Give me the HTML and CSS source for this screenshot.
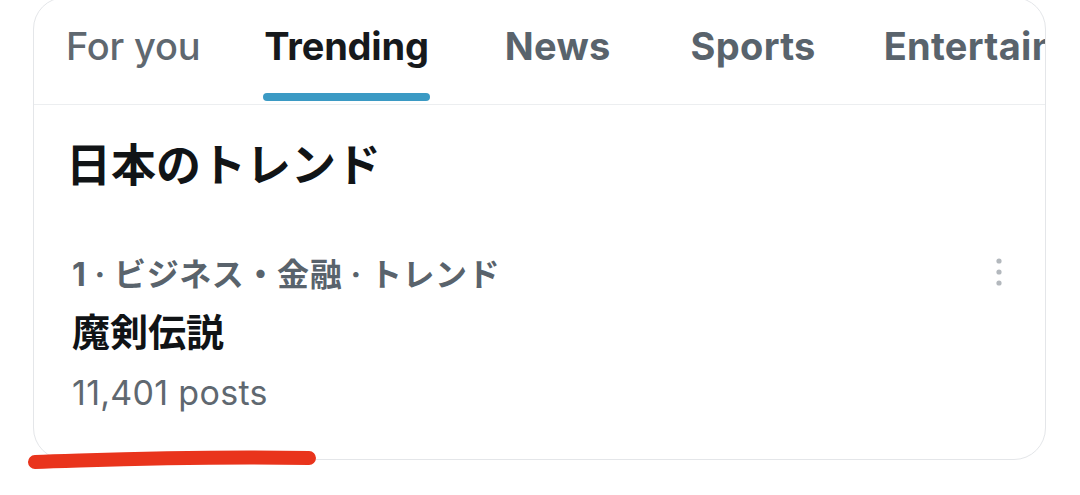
FILE: index.html
```html
<!DOCTYPE html>
<html>
<head>
<meta charset="UTF-8">
<title>Trending</title>
<link rel="stylesheet" href="styles.css">
</head>
<body>
<div class="card">
	<div class="tabs">
		<div class="tab light">For you</div>
		<div class="tab active">Trending</div>
		<div class="tab">News</div>
		<div class="tab narrow">Sports</div>
		<div class="tab">Entertainment</div>
	</div>
	<h2 class="title">日本のトレンド</h2>
	<div class="trend">
		<div class="trend-head">
			<span class="meta">1 · ビジネス・金融 · トレンド</span>
			<svg class="more" width="10" height="30" viewBox="0 0 10 30">
				<circle cx="5" cy="4" r="2.6" fill="#b3b8bd"/>
				<circle cx="5" cy="15" r="2.6" fill="#b3b8bd"/>
				<circle cx="5" cy="26" r="2.6" fill="#b3b8bd"/>
			</svg>
		</div>
		<div class="trend-name">魔剣伝説</div>
		<div class="posts">11,401 posts</div>
	</div>
</div>
<svg class="scribble" width="300" height="26" viewBox="0 0 300 26">
	<path d="M8 17 C 80 15, 150 11, 282 13" stroke="#e9341c" stroke-width="14" stroke-linecap="round" fill="none"/>
</svg>
</body>
</html>
```

FILE: styles.css
```css
body{
	margin : 0;
	background : #ffffff;
	font-family : Inter, "Noto Sans CJK JP", sans-serif;
	overflow : hidden;
}

.card{
	margin : -3px 0 0 33px;
	width : 1013px;
	height : 463px;
	border : 1.5px solid #e4e6e9;
	border-radius : 32px;
	overflow : hidden;
	box-sizing : border-box;
	background : #ffffff;
}

.tabs{
	display : flex;
	height : 107px;
	border-bottom : 1.5px solid #eceef0;
	box-sizing : border-box;
	padding-left : 32px;
	white-space : nowrap;
}

.tab{
	position : relative;
	flex-shrink : 0;
	font-size : 38px;
	font-weight : 700;
	color : #59636c;
	padding : 26px 0 0 0;
	margin-right : 80px;
	line-height : 44px;
	letter-spacing : 0.3px;
}

.tab.narrow{
	margin-right : 68px;
}

.tab.light{
	font-weight : 500;
	color : #5f6870;
	margin-right : 64px;
	letter-spacing : -0.2px;
}

.tab.active{
	color : #16191c;
	letter-spacing : -0.2px;
	margin-right : 76px;
}

.tab.active::after{
	content : "";
	position : absolute;
	left : -1px;
	right : -1px;
	bottom : 3px;
	height : 8px;
	border-radius : 4px;
	background : #3b9ac4;
}

.title{
	margin : 30px 0 0 32px;
	font-size : 45px;
	font-weight : 700;
	color : #111416;
	line-height : 56px;
	font-family : "Noto Sans CJK JP", sans-serif;
}

.trend{
	padding : 0 41px 0 38px;
	margin-top : 64px;
}

.trend-head{
	display : flex;
	justify-content : space-between;
	align-items : center;
}

.meta{
	font-size : 32px;
	font-weight : 700;
	color : #59636c;
	line-height : 40px;
	letter-spacing : 0.6px;
}

.more{
	margin-top : -6px;
}

.trend-name{
	margin-top : 12px;
	font-size : 38px;
	font-weight : 700;
	color : #101316;
	line-height : 46px;
	font-family : "Noto Sans CJK JP", sans-serif;
}

.posts{
	margin-top : 20px;
	font-size : 34px;
	color : #5f6870;
	line-height : 40px;
	letter-spacing : 0.3px;
}

.scribble{
	position : absolute;
	left : 27px;
	top : 445px;
}
```
